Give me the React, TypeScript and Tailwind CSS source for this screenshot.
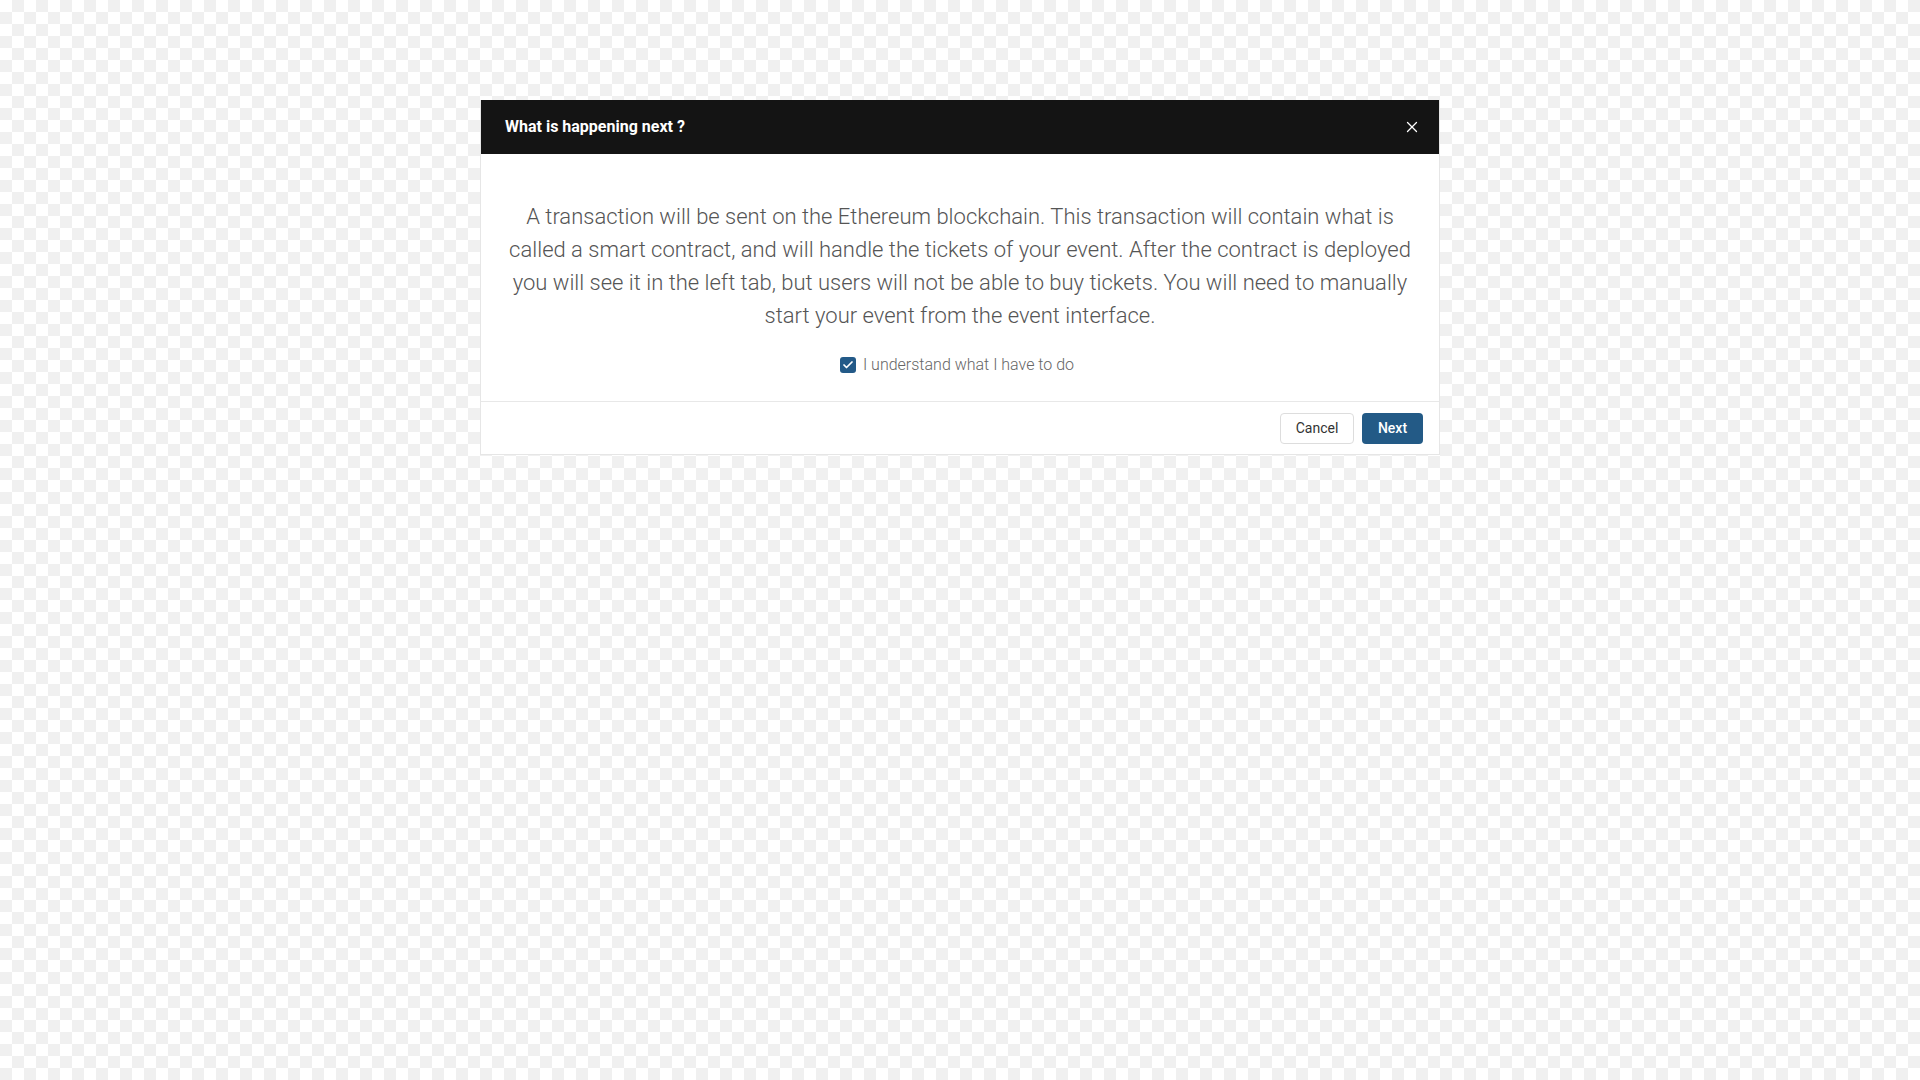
import { X, Check } from 'lucide-react';

const BODY_TEXT =
  'A transaction will be sent on the Ethereum blockchain. This transaction will contain what is called a smart contract, and will handle the tickets of your event. After the contract is deployed you will see it in the left tab, but users will not be able to buy tickets. You will need to manually start your event from the event interface.';

export default function App() {
  return (
    <div className="min-h-screen w-full bg-white bg-[conic-gradient(#f0f0f0_25%,#ffffff_0_50%,#f0f0f0_0_75%,#ffffff_0)] bg-[length:24px_24px] font-['Roboto','Liberation_Sans',sans-serif] pt-[100px]">
      <div className="mx-auto w-[960px] bg-white border-x border-b border-[#e6e6e6]">
        <div className="flex h-[54px] items-center justify-between bg-[#141414] pl-[24px] pr-[18px]">
          <h2 className="text-[16px] font-bold text-white">What is happening next ?</h2>
          <button className="text-white" aria-label="Close">
            <X size={18} strokeWidth={1.75} />
          </button>
        </div>
        <div className="flex flex-col items-center px-[28px] pt-[46px] pb-[24px]">
          <p className="text-center text-[22px] font-light leading-[33px] text-[#555555]">{BODY_TEXT}</p>
          <label className="mt-[21px] flex items-center gap-[7px] -translate-x-[3px]">
            <span className="flex h-[16px] w-[16px] items-center justify-center rounded-[3px] bg-[#235a88] text-white">
              <Check size={12} strokeWidth={3.5} />
            </span>
            <span className="text-[16px] font-light text-[#666666]">I understand what I have to do</span>
          </label>
        </div>
        <div className="flex justify-end gap-[8px] border-t border-[#e8e8e8] pt-[11px] pr-[16px] pb-[10px]">
          <button className="h-[31px] w-[74px] rounded-[4px] border border-[#dddddd] bg-white text-[14px] text-[#333333]">
            Cancel
          </button>
          <button className="h-[31px] w-[61px] rounded-[4px] bg-[#235a86] text-[14px] font-medium text-white">
            Next
          </button>
        </div>
      </div>
    </div>
  );
}
